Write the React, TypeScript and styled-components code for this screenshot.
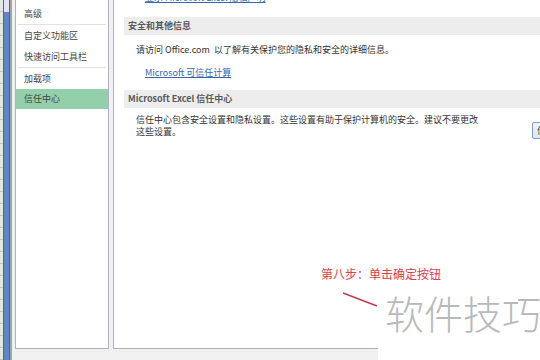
import styled, {createGlobalStyle} from "styled-components"

const GlobalStyle = createGlobalStyle`
  html, body {
    margin: 0;
    padding: 0;
  }
  body {
    width: 540px;
    height: 360px;
    overflow: hidden;
    background: #f0f0f0;
    font-family: "Noto Sans CJK SC", "Noto Sans", sans-serif;
  }
`

const navItems = [
  {id: "gj", label: "高级"},
  {id: "sep1", divider: true},
  {id: "zdy", label: "自定义功能区"},
  {id: "ksfw", label: "快速访问工具栏"},
  {id: "sep2", divider: true},
  {id: "jzx", label: "加载项"},
  {id: "xrzx", label: "信任中心", active: true},
]

export default function App() {
  return (
    <>
      <GlobalStyle />
      <Screen>
        <SheetEdge>
          <RowTicks />
          <ScrollBar />
          <EdgeBorder />
        </SheetEdge>
        <Dialog>
          <NavPanel>
            {navItems.map((item) =>
              item.divider ? (
                <NavDivider key={item.id} />
              ) : (
                <NavItem key={item.id} $active={!!item.active}>
                  {item.label}
                </NavItem>
              )
            )}
          </NavPanel>
          <ContentPanel>
            <TopLink>显示 Microsoft Excel 隐私声明</TopLink>
            <SectionHeader>安全和其他信息</SectionHeader>
            <BodyText>请访问 Office.com&nbsp; 以了解有关保护您的隐私和安全的详细信息。</BodyText>
            <Link>Microsoft 可信任计算</Link>
            <SectionHeader $gap={12}>Microsoft Excel 信任中心</SectionHeader>
            <SectionRow>
              <RowText>
                信任中心包含安全设置和隐私设置。这些设置有助于保护计算机的安全。建议不要更改
                <br />
                这些设置。
              </RowText>
              <SettingsButton>信任中心设置(T)...</SettingsButton>
            </SectionRow>
          </ContentPanel>
        </Dialog>

        <Annotation>第八步：单击确定按钮</Annotation>
        <Pointer width="40" height="20" viewBox="0 0 40 20">
          <line x1="3" y1="3" x2="37" y2="16" stroke="#c23a4b" strokeWidth="1.4" />
        </Pointer>
        <Watermark>软件技巧</Watermark>
      </Screen>
    </>
  )
}

const Screen = styled.div`
  position: relative;
  display: flex;
  width: 540px;
  height: 360px;
  overflow: hidden;
  background: #f0f0f0;
`

const SheetEdge = styled.div`
  flex: none;
  display: flex;
  width: 12px;
`

const RowTicks = styled.div`
  width: 3px;
  background: repeating-linear-gradient(to bottom, #e6e6e6 0 11px, #c4c4c4 11px 12px);
`

const ScrollBar = styled.div`
  width: 5px;
  border-left: 1px solid #4068a8;
  border-right: 1px solid #4068a8;
  background: linear-gradient(to bottom, #dfe6f2 0 12px, #5c86c8 12px);
`

const EdgeBorder = styled.div`
  width: 2px;
  background: #a4a4a4;
`

const Dialog = styled.div`
  flex: none;
  display: flex;
  gap: 4px;
  padding: 0 0 11px 3px;
`

const NavPanel = styled.div`
  flex: none;
  display: flex;
  flex-direction: column;
  width: 94px;
  box-sizing: border-box;
  padding-top: 3px;
  background: #fff;
  border: 1px solid #b3b0c6;
  border-top: none;
`

const NavItem = styled.div<{$active: boolean}>`
  height: ${(p) => (p.$active ? 20 : 21)}px;
  line-height: ${(p) => (p.$active ? 20 : 21)}px;
  padding-left: 8px;
  font-size: 9px;
  color: #444;
  background: ${(p) => (p.$active ? "#93cfaa" : "transparent")};
  white-space: nowrap;
`

const NavDivider = styled.div`
  height: 1px;
  margin: 0 2px;
  background: #e2e2e2;
`

const ContentPanel = styled.div`
  flex: none;
  display: flex;
  flex-direction: column;
  width: 480px;
  box-sizing: border-box;
  padding-left: 10px;
  background: #fff;
  border-left: 1px solid #b3b0c6;
  border-bottom: 1px solid #b3b0c6;
  overflow: hidden;
`

const Link = styled.div`
  margin: 12px 0 0 21px;
  font-size: 9px;
  line-height: 11px;
  color: #3568ae;
  text-decoration: underline;
  white-space: nowrap;
`

const TopLink = styled(Link)`
  margin-top: -8px;
  line-height: 12px;
`

const SectionHeader = styled.div<{$gap?: number}>`
  margin-top: ${(p) => p.$gap ?? 13}px;
  height: 18px;
  line-height: 18px;
  padding-left: 4px;
  background: #ededed;
  font-size: 9px;
  font-weight: bold;
  color: #5a5a5a;
  white-space: nowrap;
`

const BodyText = styled.div`
  margin: 9px 0 0 12px;
  font-size: 9px;
  line-height: 11px;
  color: #333;
  white-space: nowrap;
`

const SectionRow = styled.div`
  display: flex;
  align-items: flex-start;
  margin-top: 6px;
`

const RowText = styled(BodyText)`
  flex: none;
  width: 396px;
  margin-top: 0;
  line-height: 12px;
`

const SettingsButton = styled.div`
  flex: none;
  margin-top: 8px;
  width: 80px;
  height: 17px;
  box-sizing: border-box;
  padding-left: 4px;
  line-height: 15px;
  font-size: 9px;
  color: #333;
  border: 1px solid #7d9fc9;
  border-radius: 2px;
  background: linear-gradient(to bottom, #f1f6fc, #d9e6f4);
  white-space: nowrap;
`

const Annotation = styled.div`
  position: absolute;
  left: 321px;
  top: 266px;
  font-size: 12px;
  line-height: 16px;
  color: #d9414b;
  white-space: nowrap;
`

const Pointer = styled.svg`
  position: absolute;
  left: 340px;
  top: 290px;
`

const Watermark = styled.div`
  position: absolute;
  left: 378px;
  top: 288px;
  right: 0;
  bottom: 0;
  padding: 5px 0 0 7px;
  background: #fff;
  font-size: 39px;
  font-weight: 300;
  line-height: 39px;
  color: #b9b9b9;
  white-space: nowrap;
`
